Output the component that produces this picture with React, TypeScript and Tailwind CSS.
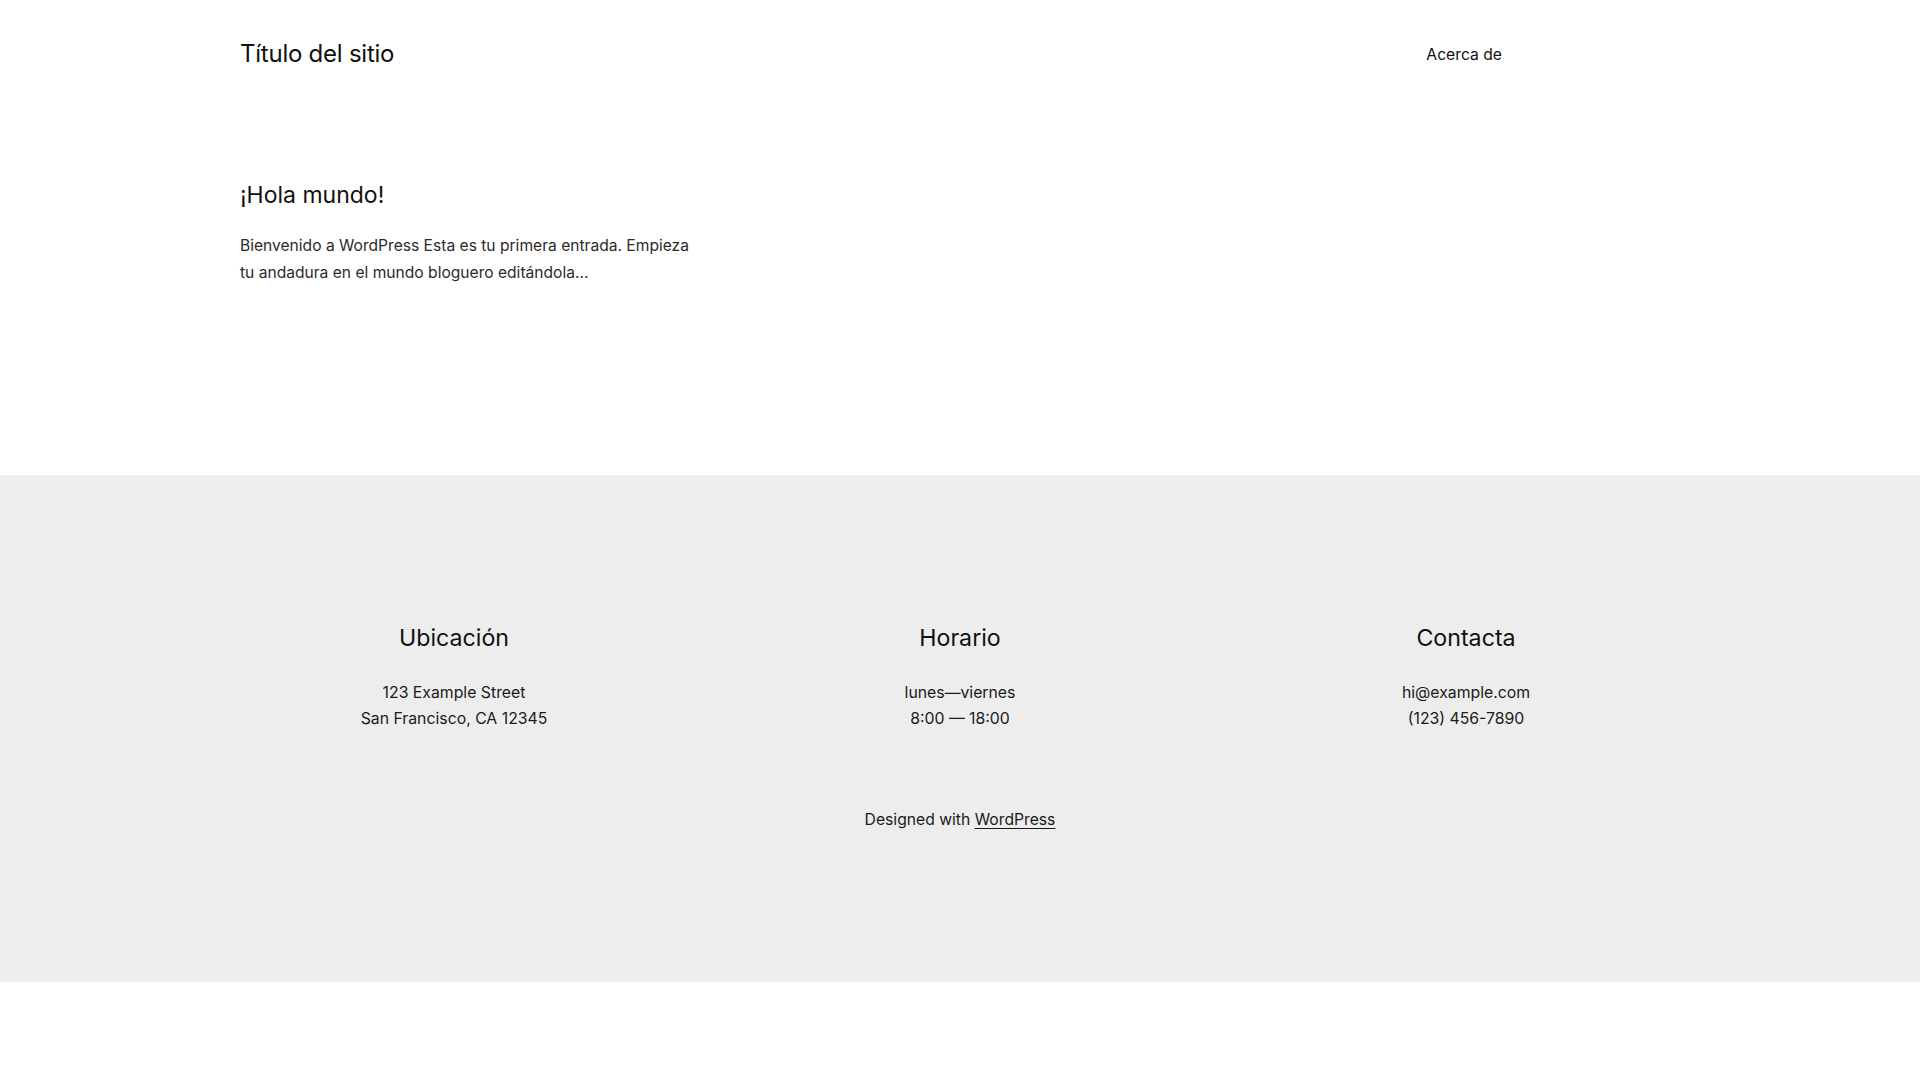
export default function App() {
  return (
    <div className="min-h-screen bg-white text-[#111111] font-['Inter','Noto_Sans',sans-serif]">
      <header className="mx-auto flex h-[108px] w-[1440px] items-center">
        <a href="#" className="text-[24px] leading-none tracking-[-0.01em]">Título del sitio</a>
        <nav className="ml-auto mr-[178px]">
          <a href="#" className="text-[15.7px]">Acerca de</a>
        </nav>
      </header>

      <main className="mx-auto w-[1440px] pt-[73px] pb-[189px]">
        <h2 className="text-[23px] leading-tight">¡Hola mundo!</h2>
        <p className="mt-[22px] w-[458px] text-[15.6px] leading-[27px] text-[#2b2b2b]">
          Bienvenido a WordPress Esta es tu primera entrada. Empieza tu andadura en el mundo bloguero editándola…
        </p>
      </main>

      <footer className="bg-[#ededed] pt-[149px] pb-[151px]">
        <div className="mx-auto grid w-[1440px] grid-cols-3 gap-[78px] text-center">
          <div>
            <h3 className="text-[23.2px] leading-tight">Ubicación</h3>
            <p className="mt-[27px] text-[15.8px] leading-[26px] text-[#1a1a1a]">
              123 Example Street
              <br />
              San Francisco, CA 12345
            </p>
          </div>
          <div>
            <h3 className="text-[23.2px] leading-tight">Horario</h3>
            <p className="mt-[27px] text-[15.8px] leading-[26px] text-[#1a1a1a]">
              lunes—viernes
              <br />
              8:00 — 18:00
            </p>
          </div>
          <div>
            <h3 className="text-[23.2px] leading-tight">Contacta</h3>
            <p className="mt-[27px] text-[15.8px] leading-[26px] text-[#1a1a1a]">
              hi@example.com
              <br />
              (123) 456-7890
            </p>
          </div>
        </div>
        <p className="mt-[76px] text-center text-[15.7px] text-[#1a1a1a]">
          Designed with{' '}
          <a href="#" className="underline underline-offset-[3px]">WordPress</a>
        </p>
      </footer>
    </div>
  )
}
